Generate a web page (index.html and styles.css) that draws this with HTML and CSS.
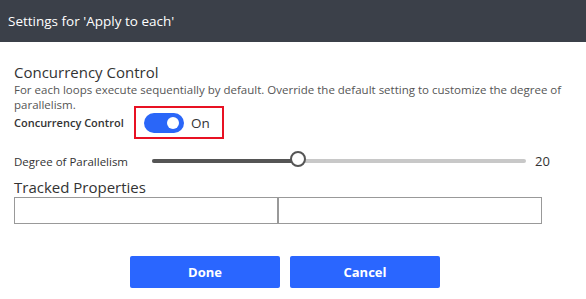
FILE: index.html
```html
<!DOCTYPE html>
<html lang="en">
<head>
  <meta charset="UTF-8">
  <meta name="viewport" content="width=device-width, initial-scale=1.0">
  <title>Settings for 'Apply to each'</title>
  <link rel="stylesheet" href="styles.css">
</head>
<body>
  <div class="panel-header">Settings for 'Apply to each'</div>

  <div class="panel-body">
    <h2 class="section-title">Concurrency Control</h2>
    <p class="section-desc">For each loops execute sequentially by default. Override the default setting to customize the degree of parallelism.</p>

    <div class="toggle-row">
      <span class="toggle-label">Concurrency Control</span>
      <div class="toggle-box">
        <span class="toggle on"><span class="toggle-thumb"></span></span>
        <span class="toggle-text">On</span>
      </div>
    </div>

    <div class="slider-row">
      <span class="slider-label">Degree of Parallelism</span>
      <div class="slider">
        <div class="slider-fill" style="width: 39%"></div>
        <div class="slider-thumb" style="left: 39%"></div>
      </div>
      <span class="slider-value">20</span>
    </div>

    <h2 class="section-title tracked">Tracked Properties</h2>
    <div class="tracked-row">
      <input type="text" class="tracked-input">
      <input type="text" class="tracked-input">
    </div>
  </div>

  <div class="panel-footer">
    <button class="btn">Done</button>
    <button class="btn">Cancel</button>
  </div>
</body>
</html>
```

FILE: styles.css
```css
body {
  margin: 0;
  font-family: "Open Sans", "Noto Sans", sans-serif;
  color: #333;
  background: #fff;
}

.panel-header {
  height: 42px;
  line-height: 42px;
  padding-left: 8px;
  background-color: #3b4049;
  color: #fff;
  font-size: 13.5px;
}

.panel-body {
  padding: 20px 14px 0 14px;
}

.section-title {
  margin: 0;
  font-size: 15px;
  font-weight: normal;
  line-height: 20px;
  color: #333;
}

.section-desc {
  margin: 0;
  font-size: 11.5px;
  line-height: 15px;
  color: #555;
}

.toggle-row {
  display: flex;
  align-items: center;
  margin-top: -6px;
}
.toggle-label {
  font-size: 11px;
  font-weight: 600;
  width: 120px;
}
.toggle-box {
  display: flex;
  align-items: center;
  height: 29px;
  padding: 0 12px 0 8px;
  border: 2px solid #e81123;
}
.toggle {
  position: relative;
  width: 40px;
  height: 20px;
  border-radius: 10px;
  background-color: #2a66f8;
}
.toggle-thumb {
  position: absolute;
  top: 4px;
  right: 5px;
  width: 12px;
  height: 12px;
  border-radius: 50%;
  background: #fff;
}
.toggle-text {
  margin-left: 7px;
  font-size: 13.5px;
  color: #333;
}

.slider-row {
  display: flex;
  align-items: center;
  height: 32px;
  margin-top: 6px;
}
.slider-label {
  font-size: 11.5px;
  width: 138px;
}
.slider {
  position: relative;
  width: 374px;
  height: 4px;
  border-radius: 2px;
  background-color: #c8c8c8;
}
.slider-fill {
  height: 4px;
  border-radius: 2px;
  background-color: #555;
}
.slider-thumb {
  position: absolute;
  top: -8px;
  width: 16px;
  height: 16px;
  margin-left: -8px;
  box-sizing: border-box;
  border: 2px solid #555;
  border-radius: 50%;
  background: #fff;
}
.slider-value {
  margin-left: 9px;
  font-size: 13px;
}

.tracked {
  margin-top: 0;
}
.tracked-row {
  display: flex;
}
.tracked-input {
  width: 264px;
  height: 27px;
  box-sizing: border-box;
  margin: 0;
  border: 1px solid #999;
  font-family: inherit;
  font-size: 13px;
}

.panel-footer {
  display: flex;
  gap: 10px;
  padding: 32px 0 0 130px;
}
.btn {
  width: 150px;
  height: 32px;
  border: none;
  border-radius: 2px;
  background-color: #2a66ff;
  color: #fff;
  font-family: inherit;
  font-size: 13px;
  font-weight: 700;
  cursor: pointer;
}
```
